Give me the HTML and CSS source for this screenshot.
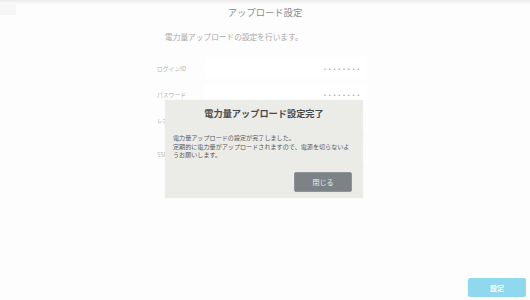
FILE: index.html
```html
<!DOCTYPE html>
<html lang="ja">
<head>
<meta charset="utf-8">
<link rel="stylesheet" href="styles.css">
</head>
<body>
<div class="page">
  <div class="topbar"></div>
  <header class="header">
    <div class="back"></div>
    <h1 class="title">アップロード設定</h1>
    <div></div>
  </header>
  <p class="lead">電力量アップロードの設定を行います。</p>
  <div class="form">
    <div class="row"><span class="label">ログインID</span><span class="field"><span class="dots">••••••••</span></span></div>
    <div class="row"><span class="label">パスワード</span><span class="field"><span class="dots">••••••••</span></span></div>
    <div class="row"><span class="label">レポート</span><span class="field"></span></div>
    <div class="row short"><span class="label"></span><span class="field"><span class="mark">-</span></span></div>
    <div class="row"><span class="label">SSID</span><span class="field"></span></div>
  </div>
  <footer class="footer"><button class="submit">設定</button></footer>
</div>
<div class="modal">
  <h2 class="modal-title">電力量アップロード設定完了</h2>
  <p class="modal-body">電力量アップロードの設定が完了しました。<br>定期的に電力量がアップロードされますので、電源を切らないようお願いします。</p>
  <div class="modal-actions"><button class="close">閉じる</button></div>
</div>
</body>
</html>
```
FILE: styles.css
```css
html, body {
  margin: 0;
  padding: 0;
  background: #fdfdfd;
  font-family: "Noto Sans CJK JP", "Noto Sans", sans-serif;
}
.page {
  height: 300px;
  display: flex;
  flex-direction: column;
}
.topbar {
  height: 4px;
  background: linear-gradient(#ececec, #fbfbfb);
}
.header {
  display: grid;
  grid-template-columns: 16px 1fr 16px;
  height: 17px;
  align-items: center;
}
.back {
  height: 11px;
  background: #f6f6f6;
  align-self: start;
}
.title {
  margin: 0;
  text-align: center;
  font-size: 9.3px;
  font-weight: normal;
  color: #8c8c8c;
  line-height: 17px;
}
.lead {
  margin: 9px 0 0 0;
  padding-left: 165px;
  font-size: 7.7px;
  color: #a8a8a8;
  line-height: 14px;
}
.form {
  margin: 11px 0 0 155px;
  width: 212px;
  display: flex;
  flex-direction: column;
}
.row {
  display: grid;
  grid-template-columns: 50px 1fr;
  height: 26px;
  align-items: center;
}
.row.short { height: 8px; }
.label {
  font-size: 5.8px;
  color: #b4b4b4;
  padding-left: 2px;
}
.field {
  height: 22px;
  background: #ffffff;
  display: flex;
  align-items: center;
  justify-content: flex-end;
  padding-right: 5px;
}
.row.short .field { height: 8px; background: transparent; }
.dots {
  font-size: 6px;
  letter-spacing: 2.7px;
  color: #a8a8a8;
}
.mark { font-size: 5px; color: #ccc; }
.footer {
  margin-top: auto;
  display: flex;
  justify-content: flex-end;
  padding: 0 4px 3px 0;
}
.submit {
  width: 58px;
  height: 19px;
  border: none;
  border-radius: 2px;
  background: #8fd8ee;
  color: #ffffff;
  font-family: inherit;
  font-size: 7px;
  font-weight: bold;
  padding: 0;
}
.modal {
  position: absolute;
  left: 165px;
  top: 100px;
  width: 198px;
  height: 98px;
  box-sizing: border-box;
  background: #ebebe8;
  box-shadow: 0 0 1px rgba(0,0,0,0.08);
  display: flex;
  flex-direction: column;
  padding: 6px 8px 6px 8px;
}
.modal-title {
  margin: 0;
  text-align: center;
  font-size: 9.2px;
  font-weight: bold;
  color: #4a4a4a;
  line-height: 14px;
}
.modal-body {
  margin: 14px 5px 0 0;
  font-size: 6.1px;
  line-height: 8.5px;
  color: #5a5a5a;
}
.modal-actions {
  margin-top: auto;
  display: flex;
  justify-content: flex-end;
  padding-right: 3px;
}
.close {
  width: 58px;
  height: 20px;
  border: 1px solid #8e9398;
  border-radius: 2px;
  background: #7d8287;
  color: #e8e8ea;
  font-family: inherit;
  font-size: 7px;
  padding: 0;
}
```
